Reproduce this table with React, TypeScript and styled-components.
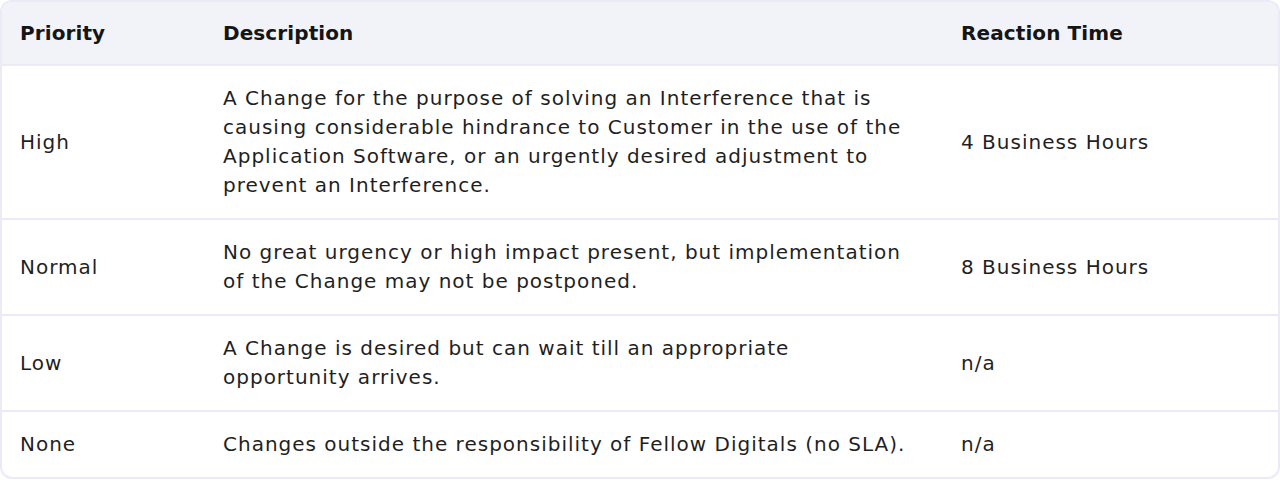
import { Fragment } from 'react'
import styled, { createGlobalStyle } from 'styled-components'

const GlobalStyle = createGlobalStyle`
  html, body {
    margin: 0;
    padding: 0;
    background: #ffffff;
  }
  body {
    font-family: "DejaVu Sans", "Open Sans", sans-serif;
    color: #1c1c1c;
  }
`

const Frame = styled.div`
  width: 1280px;
  height: 480px;
  box-sizing: border-box;
`

const Table = styled.table`
  width: 100%;
  border-collapse: separate;
  border-spacing: 0;
  border: 2px solid #eceaf6;
  border-radius: 12px;
  overflow: hidden;
  table-layout: fixed;
  box-sizing: border-box;
`

const THead = styled.thead`
  background: #f1f3f9;
`

const TH = styled.th<{ $width?: number }>`
  width: ${p => (p.$width ? `${p.$width}px` : 'auto')};
  height: 64px;
  padding: 0 0 0 18px;
  text-align: start;
  font-size: 20px;
  font-weight: 700;
  letter-spacing: 0.1px;
  color: #151515;
  border-bottom: 2px solid #eceaf6;
  box-sizing: border-box;
`

const TR = styled.tr`
  &:not(:last-child) td {
    border-bottom: 2px solid #eceaf6;
  }
`

const TD = styled.td`
  padding: 18px 0 18px 18px;
  font-size: 20px;
  line-height: 29px;
  letter-spacing: 1px;
  vertical-align: middle;
  color: #1f1f1f;
`

const rows = [
  {
    priority: 'High',
    description: [
      'A Change for the purpose of solving an Interference that is',
      'causing considerable hindrance to Customer in the use of the',
      'Application Software, or an urgently desired adjustment to',
      'prevent an Interference.',
    ],
    reaction: '4 Business Hours',
  },
  {
    priority: 'Normal',
    description: [
      'No great urgency or high impact present, but implementation',
      'of the Change may not be postponed.',
    ],
    reaction: '8 Business Hours',
  },
  {
    priority: 'Low',
    description: [
      'A Change is desired but can wait till an appropriate',
      'opportunity arrives.',
    ],
    reaction: 'n/a',
  },
  {
    priority: 'None',
    description: ['Changes outside the responsibility of Fellow Digitals (no SLA).'],
    reaction: 'n/a',
  },
]

export default function App() {
  return (
    <>
      <GlobalStyle />
      <Frame>
        <Table>
          <THead>
            <tr>
              <TH $width={203}>Priority</TH>
              <TH $width={738}>Description</TH>
              <TH>Reaction Time</TH>
            </tr>
          </THead>
          <tbody>
            {rows.map(r => (
              <TR key={r.priority}>
                <TD>{r.priority}</TD>
                <TD>
                  {r.description.map((line, i) => (
                    <Fragment key={i}>
                      {i > 0 && <br />}
                      {line}
                    </Fragment>
                  ))}
                </TD>
                <TD>{r.reaction}</TD>
              </TR>
            ))}
          </tbody>
        </Table>
      </Frame>
    </>
  )
}
